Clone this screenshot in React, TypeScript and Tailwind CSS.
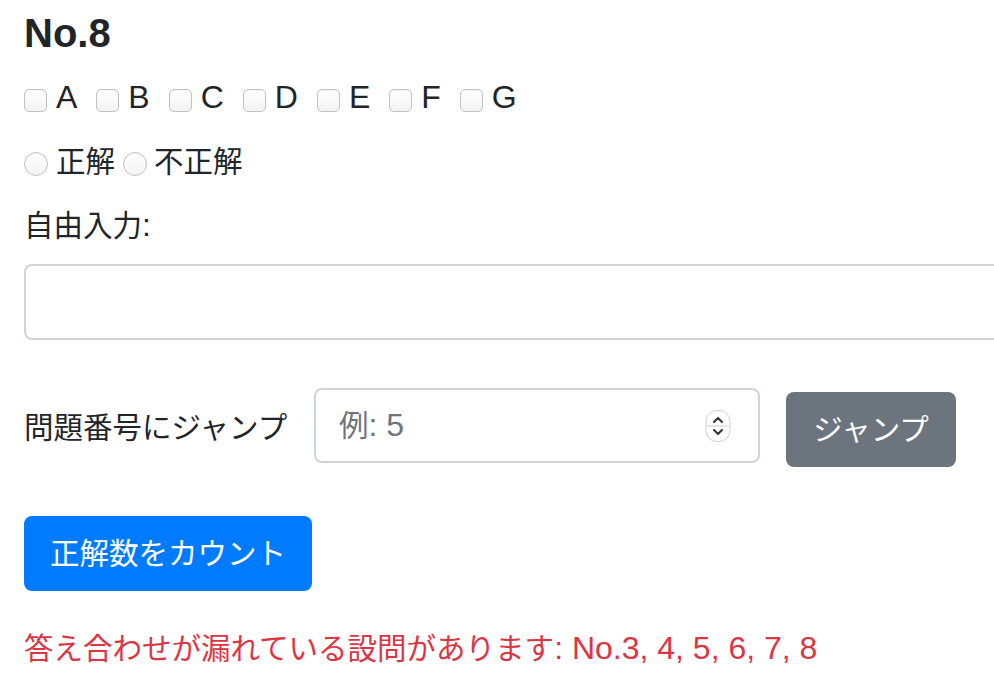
import React from "react";

const J = ({ children }: { children: React.ReactNode }) => (
  <span className="text-[29.5px]">{children}</span>
);

const Checkbox = () => (
  <span className="mt-[6px] w-[23px] h-[23px] shrink-0 rounded-[5px] border border-[#c2c2c2] bg-gradient-to-b from-white to-[#f3f3f3] shadow-[inset_0_1px_1px_rgba(0,0,0,0.05)]" />
);

const Radio = () => (
  <span className="mt-[5px] w-[24px] h-[24px] shrink-0 rounded-full border border-[#c2c2c2] bg-gradient-to-b from-white to-[#f3f3f3] shadow-[inset_0_1px_1px_rgba(0,0,0,0.05)]" />
);

const Spin = () => (
  <svg width="26" height="34" viewBox="0 0 26 34" className="shrink-0">
    <rect x="1" y="1.5" width="24" height="31" rx="11" fill="#fff" stroke="#d0d0d0" strokeWidth="1" />
    <line x1="2" y1="17" x2="24" y2="17" stroke="#dcdcdc" strokeWidth="1.5" />
    <path d="M9 13 L13 9 L17 13" fill="none" stroke="#333" strokeWidth="2" strokeLinecap="round" strokeLinejoin="round" />
    <path d="M9 21 L13 25 L17 21" fill="none" stroke="#333" strokeWidth="2" strokeLinecap="round" strokeLinejoin="round" />
  </svg>
);

export default function App() {
  const letters = ["A", "B", "C", "D", "E", "F", "G"];
  return (
    <div className="w-[994px] h-[688px] overflow-hidden bg-white text-[#212529] font-['Liberation_Sans','Noto_Sans_CJK_JP',sans-serif] text-[32px] leading-[48px]">
      <div className="pl-[24px] pt-[9px]">
        <h5 className="text-[40px] leading-[48px] font-bold">No.8</h5>

        <div className="mt-[16px] h-[48px] flex items-center">
          {letters.map((l) => (
            <label key={l} className="flex items-center mr-[19px]">
              <Checkbox />
              <span className="ml-[9px]">{l}</span>
            </label>
          ))}
        </div>

        <div className="mt-[16px] h-[48px] flex items-center">
          <Radio />
          <span className="ml-[8px]">
            <J>正解</J>
          </span>
          <span className="ml-[8px] flex items-center">
            <Radio />
          </span>
          <span className="ml-[7px]">
            <J>不正解</J>
          </span>
        </div>

        <div className="mt-[16px] h-[48px] flex items-center">
          <span>
            <J>自由入力</J>:
          </span>
        </div>

        <div className="mt-[15px] h-[76px] w-[1100px] border-2 border-[#ced4da] rounded-[8px] bg-white" />

        <div className="mt-[48px] h-[79px] flex items-start">
          <div className="w-[290px] h-[79px] flex items-center">
            <J>問題番号にジャンプ</J>
          </div>
          <div className="w-[446px] h-[75px] border-2 border-[#ced4da] rounded-[8px] bg-white flex items-center pl-[23px] pr-[27px]">
            <span className="text-[#6c757d] flex-1">
              <J>例</J>: 5
            </span>
            <Spin />
          </div>
          <button className="mt-[4px] ml-[26px] w-[170px] h-[75px] rounded-[8px] bg-[#6c757d] text-white flex items-center justify-center">
            <J>ジャンプ</J>
          </button>
        </div>

        <button className="mt-[49px] w-[288px] h-[75px] rounded-[8px] bg-[#007bff] text-white flex items-center justify-center">
          <J>正解数をカウント</J>
        </button>

        <div className="mt-[33px] h-[48px] flex items-center text-[#dc3545]">
          <span>
            <J>答え合わせが漏れている設問があります</J>
            <span className="text-[32px]">: No.3, 4, 5, 6, 7, 8</span>
          </span>
        </div>
      </div>
    </div>
  );
}
